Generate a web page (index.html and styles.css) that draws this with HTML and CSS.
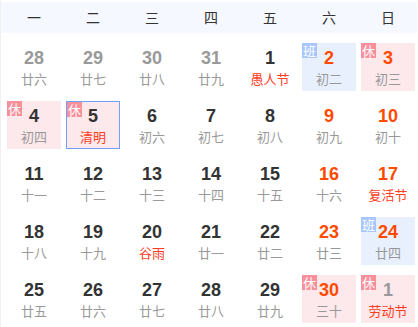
FILE: index.html
```html
<!DOCTYPE html>
<html lang="zh">
<head>
<meta charset="utf-8">
<link rel="stylesheet" href="styles.css">
</head>
<body>
<div class="cal">
  <div class="week">
    <div>一</div><div>二</div><div>三</div><div>四</div><div>五</div><div>六</div><div>日</div>
  </div>
  <div class="days">
    <div class="day other"><span class="num">28</span><span class="lunar">廿六</span></div>
    <div class="day other"><span class="num">29</span><span class="lunar">廿七</span></div>
    <div class="day other"><span class="num">30</span><span class="lunar">廿八</span></div>
    <div class="day other"><span class="num">31</span><span class="lunar">廿九</span></div>
    <div class="day"><span class="num">1</span><span class="lunar fest">愚人节</span></div>
    <div class="day work wknd"><i class="tag">班</i><span class="num">2</span><span class="lunar">初二</span></div>
    <div class="day rest wknd"><i class="tag">休</i><span class="num">3</span><span class="lunar">初三</span></div>

    <div class="day rest"><i class="tag">休</i><span class="num">4</span><span class="lunar">初四</span></div>
    <div class="day rest sel"><i class="tag">休</i><span class="num">5</span><span class="lunar fest">清明</span></div>
    <div class="day"><span class="num">6</span><span class="lunar">初六</span></div>
    <div class="day"><span class="num">7</span><span class="lunar">初七</span></div>
    <div class="day"><span class="num">8</span><span class="lunar">初八</span></div>
    <div class="day wknd"><span class="num">9</span><span class="lunar">初九</span></div>
    <div class="day wknd"><span class="num">10</span><span class="lunar">初十</span></div>

    <div class="day"><span class="num">11</span><span class="lunar">十一</span></div>
    <div class="day"><span class="num">12</span><span class="lunar">十二</span></div>
    <div class="day"><span class="num">13</span><span class="lunar">十三</span></div>
    <div class="day"><span class="num">14</span><span class="lunar">十四</span></div>
    <div class="day"><span class="num">15</span><span class="lunar">十五</span></div>
    <div class="day wknd"><span class="num">16</span><span class="lunar">十六</span></div>
    <div class="day wknd"><span class="num">17</span><span class="lunar fest">复活节</span></div>

    <div class="day"><span class="num">18</span><span class="lunar">十八</span></div>
    <div class="day"><span class="num">19</span><span class="lunar">十九</span></div>
    <div class="day"><span class="num">20</span><span class="lunar fest">谷雨</span></div>
    <div class="day"><span class="num">21</span><span class="lunar">廿一</span></div>
    <div class="day"><span class="num">22</span><span class="lunar">廿二</span></div>
    <div class="day wknd"><span class="num">23</span><span class="lunar">廿三</span></div>
    <div class="day work wknd"><i class="tag">班</i><span class="num">24</span><span class="lunar">廿四</span></div>

    <div class="day"><span class="num">25</span><span class="lunar">廿五</span></div>
    <div class="day"><span class="num">26</span><span class="lunar">廿六</span></div>
    <div class="day"><span class="num">27</span><span class="lunar">廿七</span></div>
    <div class="day"><span class="num">28</span><span class="lunar">廿八</span></div>
    <div class="day"><span class="num">29</span><span class="lunar">廿九</span></div>
    <div class="day rest wknd"><i class="tag">休</i><span class="num">30</span><span class="lunar">三十</span></div>
    <div class="day rest other"><i class="tag">休</i><span class="num">1</span><span class="lunar fest">劳动节</span></div>
  </div>
</div>
</body>
</html>
```

FILE: styles.css
```css
html, body {
  margin: 0;
  padding: 0;
  background: #fff;
}
.cal {
  width: 417px;
  height: 327px;
  border-left: 1px solid #f0f0f0;
  font-family: "Liberation Sans", "Noto Sans CJK SC", sans-serif;
  padding-top: 2px;
  box-sizing: border-box;
}
.week {
  height: 31px;
  background: #f5f8ff;
  display: grid;
  grid-template-columns: repeat(7, 54px);
  column-gap: 5px;
  padding-left: 6px;
  align-items: center;
  font-family: "Noto Sans CJK SC", sans-serif;
  font-size: 14px;
  color: #333;
}
.week div {
  text-align: center;
  line-height: 31px;
}
.days {
  display: grid;
  grid-template-columns: repeat(7, 54px);
  grid-auto-rows: 48px;
  column-gap: 5px;
  row-gap: 10px;
  padding-left: 6px;
  margin-top: 10px;
}
.day {
  position: relative;
  display: flex;
  flex-direction: column;
  align-items: center;
  padding-top: 4px;
  box-sizing: border-box;
}
.num {
  font-size: 18px;
  font-weight: bold;
  line-height: 22px;
  color: #333;
}
.lunar {
  font-family: "Noto Sans CJK SC", sans-serif;
  font-size: 13px;
  line-height: 20px;
  color: #999;
}
.lunar.fest {
  color: #ff3d1f;
}
.other .num {
  color: #999;
}
.wknd .num {
  color: #ff4a00;
}
.work {
  background: #e8f0fe;
}
.rest {
  background: #fde8eb;
}
.sel {
  border: 1px solid #6fa0f6;
  padding-top: 3px;
}
.tag {
  position: absolute;
  top: 0;
  left: 0;
  width: 15px;
  height: 15px;
  font-style: normal;
  font-family: "Noto Sans CJK SC", sans-serif;
  font-size: 13px;
  line-height: 15px;
  text-align: center;
  color: #fff;
}
.work .tag {
  background: #a7c7fb;
}
.rest .tag {
  background: #f8909c;
}
```
